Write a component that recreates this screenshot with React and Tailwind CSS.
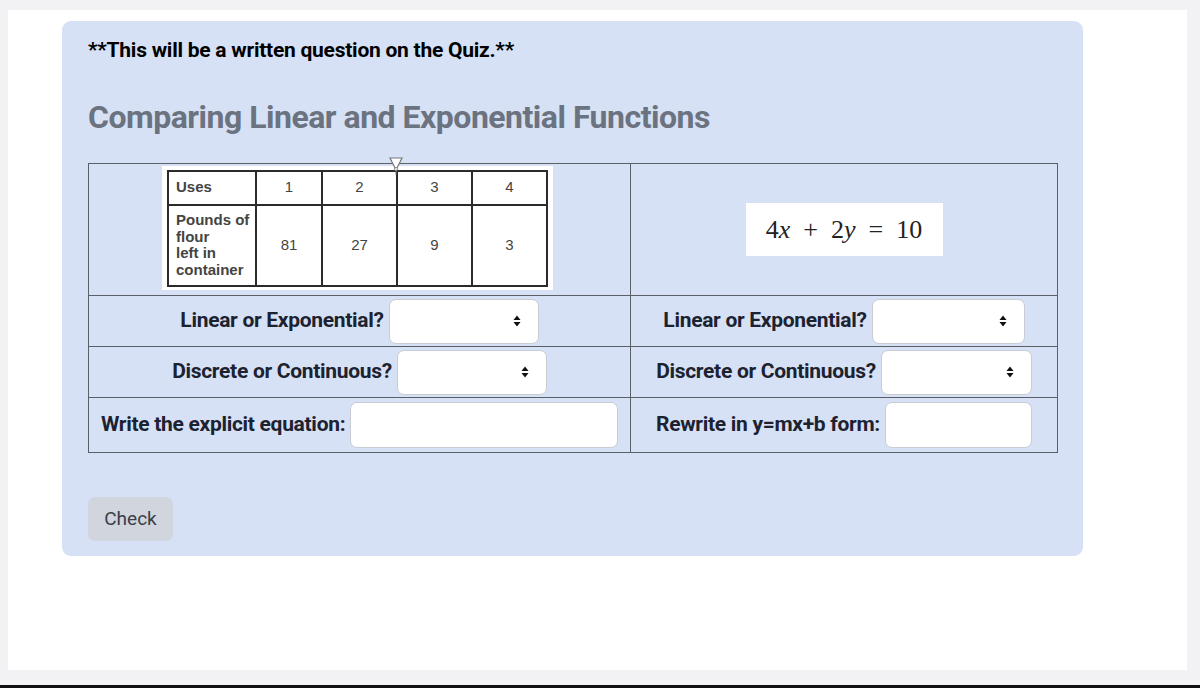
import React from 'react';

const font = { fontFamily: 'Roboto, "Liberation Sans", sans-serif' };

function Arrows() {
  return (
    <svg width="8" height="12" viewBox="0 0 8 12" className="pointer-events-none absolute right-[18px] top-1/2 -translate-y-1/2">
      <path d="M4 0.5 L7.5 5 L0.5 5 Z" fill="#111" />
      <path d="M4 11.5 L7.5 7 L0.5 7 Z" fill="#111" />
    </svg>
  );
}

function Select({ width }) {
  return (
    <div className={`relative inline-block h-[45px] ${width}`}>
      <select className="h-full w-full appearance-none rounded-[7px] border border-[#c9ccd2] bg-white outline-none" defaultValue="">
        <option value=""></option>
        <option>Linear</option>
        <option>Exponential</option>
      </select>
      <Arrows />
    </div>
  );
}

function Field({ label, children }) {
  return (
    <div className="flex items-center justify-center gap-[5px]">
      <span className="text-[21px] font-bold tracking-[-0.3px] text-[#1c2230]">{label}</span>
      {children}
    </div>
  );
}

function FlourTable() {
  const cell = 'border-2 border-[#2b2b2b] text-center text-[15px] text-[#444]';
  return (
    <div className="relative inline-block bg-white px-[5px] pt-[4px] pb-[3px]">
      <svg width="16" height="18" viewBox="0 0 16 18" className="absolute left-[226px] top-[-9px]">
        <path d="M2 1 L14 1 L9 11 L7 11 Z" fill="#fff" stroke="#777" strokeWidth="1.2" />
        <line x1="8" y1="11" x2="8" y2="18" stroke="#777" strokeWidth="1" />
        <circle cx="8" cy="12" r="1.5" fill="#fff" stroke="#777" strokeWidth="0.8" />
      </svg>
      <table className="border-collapse" style={{ fontFamily: '"Liberation Sans", Arial, sans-serif' }}>
        <tbody>
          <tr className="h-[34px]">
            <td className={`${cell} w-[88px] pl-[7px] text-left text-[14px] font-bold text-[#222]`}>Uses</td>
            <td className={`${cell} w-[66px]`}>1</td>
            <td className={`${cell} w-[75px]`}>2</td>
            <td className={`${cell} w-[75px]`}>3</td>
            <td className={`${cell} w-[75px]`}>4</td>
          </tr>
          <tr className="h-[81px]">
            <td className={`${cell} pl-[7px] text-left text-[14px] font-bold leading-[16.5px] text-[#222]`}>
              Pounds of<br />flour<br />left in<br />container
            </td>
            <td className={cell}>81</td>
            <td className={cell}>27</td>
            <td className={cell}>9</td>
            <td className={cell}>3</td>
          </tr>
        </tbody>
      </table>
    </div>
  );
}

export default function App() {
  const td = 'border border-[#5a5f68] p-0 align-middle';
  return (
    <div className="flex h-[688px] w-full flex-col bg-[#f2f2f4]" style={font}>
      <div className="ml-[8px] mt-[10px] h-[660px] w-[1179px] bg-white pl-[54px] pt-[11px]">
        <div className="h-[535px] w-[1021px] rounded-[9px] bg-[#d6e1f5] pl-[26px] pt-[17px]">
          <p className="text-[21px] font-bold leading-[24px] tracking-[-0.25px] text-black">
            **This will be a written question on the Quiz.**
          </p>
          <h2 className="mt-[36px] text-[32px] font-bold leading-[38px] tracking-[-0.5px] text-[#6b7280]">
            Comparing Linear and Exponential Functions
          </h2>
          <table className="mt-[27px] w-[969px] table-fixed border-collapse">
            <colgroup>
              <col className="w-[542px]" />
              <col className="w-[427px]" />
            </colgroup>
            <tbody>
              <tr className="h-[132px]">
                <td className={`${td} text-center`}>
                  <div className="flex justify-center pr-[4px] pb-[4px]">
                    <FlourTable />
                  </div>
                </td>
                <td className={`${td} text-center`}>
                  <div className="flex justify-center">
                    <div
                      className="flex h-[53px] w-[197px] items-center justify-center gap-[13px] bg-white text-[26px] text-[#222]"
                      style={{ fontFamily: '"Liberation Serif", "DejaVu Serif", serif' }}
                    >
                      <span>4<i>x</i></span>
                      <span>+</span>
                      <span>2<i>y</i></span>
                      <span>=</span>
                      <span>10</span>
                    </div>
                  </div>
                </td>
              </tr>
              <tr className="h-[51px]">
                <td className={td}>
                  <Field label="Linear or Exponential?"><Select width="w-[150px]" /></Field>
                </td>
                <td className={td}>
                  <Field label="Linear or Exponential?"><Select width="w-[153px]" /></Field>
                </td>
              </tr>
              <tr className="h-[51px]">
                <td className={td}>
                  <Field label="Discrete or Continuous?"><Select width="w-[150px]" /></Field>
                </td>
                <td className={td}>
                  <Field label="Discrete or Continuous?"><Select width="w-[151px]" /></Field>
                </td>
              </tr>
              <tr className="h-[55px]">
                <td className={td}>
                  <div className="flex items-center gap-[5px] pl-[12px]">
                    <span className="text-[21px] font-bold tracking-[-0.3px] text-[#1c2230]">Write the explicit equation:</span>
                    <input className="h-[46px] w-[268px] rounded-[7px] border border-[#c9ccd2] bg-white outline-none" />
                  </div>
                </td>
                <td className={td}>
                  <Field label="Rewrite in y=mx+b form:">
                    <input className="h-[46px] w-[147px] rounded-[7px] border border-[#c9ccd2] bg-white outline-none" />
                  </Field>
                </td>
              </tr>
            </tbody>
          </table>
          <button className="mt-[44px] h-[44px] w-[85px] rounded-[7px] bg-[#d0d5de] text-[19px] text-[#3a3f47]">
            Check
          </button>
        </div>
      </div>
      <div className="flex-1" />
      <div className="h-[3px] w-full bg-[#111]" />
    </div>
  );
}
